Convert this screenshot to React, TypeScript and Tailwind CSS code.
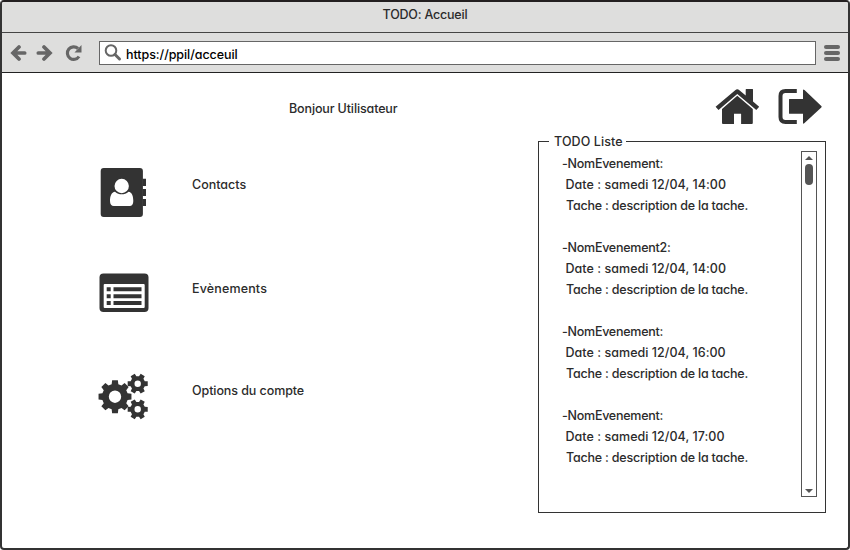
import React from "react";

const events = [
  { name: "-NomEvenement:", date: "Date : samedi 12/04, 14:00" },
  { name: "-NomEvenement2:", date: "Date : samedi 12/04, 14:00" },
  { name: "-NomEvenement:", date: "Date : samedi 12/04, 16:00" },
  { name: "-NomEvenement:", date: "Date : samedi 12/04, 17:00" },
];

function gearPath(cx: number, cy: number, r: number, root: number, hole: number, teeth: number) {
  const step = (Math.PI * 2) / teeth;
  const points: string[] = [];
  for (let i = 0; i < teeth; i++) {
    const a = i * step;
    const corners = [
      [root, -0.33],
      [r, -0.22],
      [r, 0.22],
      [root, 0.33],
    ];
    for (const [rad, k] of corners) {
      points.push(`${(cx + rad * Math.cos(a + k * step)).toFixed(2)} ${(cy + rad * Math.sin(a + k * step)).toFixed(2)}`);
    }
  }
  return `M${points.join("L")}ZM${cx - hole} ${cy}a${hole} ${hole} 0 1 0 ${hole * 2} 0a${hole} ${hole} 0 1 0 ${-hole * 2} 0Z`;
}

function ContactsIcon() {
  return (
    <svg width="50" height="52" viewBox="98 166 50 52" fill="#333">
      <rect x="100.7" y="168" width="42.2" height="49" rx="3" />
      <path d="M142.5 178.7h3.5v7.3h-3.5zM142.5 189h3.5v7h-3.5zM142.5 199h3.5v7h-3.5z" />
      <path fill="#fff" d="M115 191.7c4 3.5 9.5 3.5 13.5 0c3.5 0.3 4.8 4.5 4.8 9.3c0 3.5-1.5 5-3.5 5h-16c-2.3 0-3.8-1.5-3.8-5c0-5 1.5-9 5-9.3z" />
      <circle cx="121.7" cy="186" r="7.2" fill="#fff" />
    </svg>
  );
}

function EventsIcon() {
  return (
    <svg width="50" height="40" viewBox="99 273 50 40">
      <rect x="99.5" y="273.5" width="49" height="38.5" rx="4" fill="#333" />
      <rect x="103.7" y="284" width="41" height="24" rx="1" fill="#fff" />
      <path fill="#333" d="M106.7 287.3h4v4h-4zM113.5 287.3h28v4h-28zM106.7 294.2h4v4h-4zM113.5 294.2h28v4h-28zM106.7 301.1h4v4h-4zM113.5 301.1h28v4h-28z" />
    </svg>
  );
}

function GearsIcon() {
  return (
    <svg width="52" height="48" viewBox="98 373 52 48" fill="#333" fillRule="evenodd">
      <path d={gearPath(115, 396.7, 16.7, 13, 6.2, 8)} />
      <path d={gearPath(137.7, 383.7, 10.3, 7.5, 3.2, 6)} />
      <path d={gearPath(137.7, 409.3, 10.3, 7.5, 3.2, 6)} />
    </svg>
  );
}

function HomeIcon() {
  return (
    <svg width="46" height="36" viewBox="715 89 46 36" fill="#333">
      <path d="M715.6 106.8L735.2 90.2Q737.3 88.3 739.4 90.2L745.7 95.5V89.5Q745.7 89 746.2 89H752.5Q753 89 753 89.5V101.6L759.2 106.8L756.3 110L737.3 94L718.5 110Z" />
      <path d="M737.3 95.8L752.8 109V123Q752.8 124 751.8 124H741.1V113.7H734V124H723Q722 124 722 123V109Z" />
    </svg>
  );
}

function ExitIcon() {
  return (
    <svg width="46" height="36" viewBox="777 89 46 36">
      <path d="M796.8 91H785.5Q780.5 91 780.5 96V117Q780.5 122 785.5 122H796.8" fill="none" stroke="#333" strokeWidth="4" />
      <path d="M789 99.5Q789 99 789.5 99H803V90.2Q803 88.8 804.5 90L821.3 106Q822 106.7 821.3 107.4L804.5 123Q803 124.3 803 123V113.7H789.5Q789 113.7 789 113.2Z" fill="#333" />
    </svg>
  );
}

function Arrow({ flip }: { flip?: boolean }) {
  return (
    <svg width="17" height="16" viewBox="0 0 17 16" className={flip ? "-scale-x-100" : ""} fill="none" stroke="#666" strokeWidth="3.7">
      <path d="M9 2L3 8L9 14M3.5 8H14.7" strokeLinecap="round" />
    </svg>
  );
}

function MenuRow({ icon, label, className, labelClass }: { icon: React.ReactNode; label: string; className: string; labelClass: string }) {
  return (
    <div className={`flex h-[52px] items-start ${className}`}>
      <div className="w-[94px]">{icon}</div>
      <span className={labelClass}>{label}</span>
    </div>
  );
}

export default function App() {
  return (
    <div className="flex h-[550px] w-[850px] flex-col overflow-hidden rounded-[4px] border-2 border-[#333] border-t-[#231f20] bg-white font-['Inter','Liberation_Sans',sans-serif] text-[12.5px] leading-[21px] font-medium whitespace-pre text-[#2b2b2b] [font-feature-settings:'cv11']">
      <header className="h-[31px] shrink-0 border-b border-[#444] bg-[#dededd] pt-[2px] text-center">
        <span className="tracking-[-0.2px]">TODO: Accueil</span>
      </header>
      <nav className="flex h-10 shrink-0 items-center border-b border-[#222] bg-[#dededd] pl-2">
        <Arrow />
        <div className="w-[9px]" />
        <Arrow flip />
        <svg className="ml-[12px]" width="18" height="18" viewBox="0 0 18 18" fill="none" stroke="#666" strokeWidth="3.2">
          <path d="M13 4.5A6.3 6.3 0 1 0 14 12.500" />
          <path d="M16.500 1V8.500H9.500Z" fill="#666" stroke="none" />
        </svg>
        <div className="ml-[16px] flex h-6 w-[717px] items-center border border-[#666] bg-white pl-1 text-black">
          <svg width="18" height="18" viewBox="0 0 18 18" fill="none" stroke="#666">
            <circle cx="7" cy="6.5" r="5.3" strokeWidth="2" />
            <path d="M11 10.5L15.5 15" strokeWidth="3" strokeLinecap="round" />
          </svg>
          <span className="ml-[4px] pt-[3px] tracking-[-0.06px]">https://ppil/acceuil</span>
        </div>
        <div className="ml-[8px] flex flex-col gap-[2px]">
          <div className="h-1 w-4 rounded-full bg-[#666]" />
          <div className="h-1 w-4 rounded-full bg-[#666]" />
          <div className="h-1 w-4 rounded-full bg-[#666]" />
        </div>
      </nav>
      <main className="flex flex-1">
        <section className="w-[536px]">
          <p className="pt-[25px] pl-[287px] tracking-[-0.13px]">Bonjour Utilisateur</p>
          <div className="pt-[47px] pl-[96px]">
            <MenuRow icon={<ContactsIcon />} label="Contacts" className="" labelClass="pt-[8px]" />
            <MenuRow icon={<div className="pl-px"><EventsIcon /></div>} label="Evènements" className="mt-[52px] pt-[3px]" labelClass="pt-[5px] tracking-[0.15px]" />
            <MenuRow icon={<GearsIcon />} label="Options du compte" className="mt-[51px]" labelClass="pt-[7px] tracking-[-0.08px]" />
          </div>
        </section>
        <section className="w-[310px]">
          <div className="flex gap-4 pt-4 pl-[177px]">
            <HomeIcon />
            <ExitIcon />
          </div>
          <fieldset className="mt-[6px] h-[382px] w-[288px] border border-[#333] pl-[10px]">
            <legend className="pr-[3px] pl-[5px] tracking-[0.1px]">TODO Liste</legend>
            <div className="-mt-px flex">
              <div className="w-[252px] pt-[2px] pl-[13px]">
                {events.map((event, i) => (
                  <div key={i} className="mb-[21px]">
                    <p className="tracking-[-0.25px]">{event.name}</p>
                    <p className="pl-[3.5px] tracking-[0.04px]">{event.date}</p>
                    <p className="pl-[4px] tracking-[-0.2px]">Tache : description de la tache.</p>
                  </div>
                ))}
              </div>
              <div className="flex h-[346px] w-4 flex-col items-center border border-[#555] pt-[4px]">
                <div className="border-x-4 border-b-4 border-x-transparent border-b-[#555]" />
                <div className="mt-[4px] h-[21px] w-2 rounded-full bg-[#555]" />
                <div className="mt-auto mb-[3px] border-x-4 border-t-4 border-x-transparent border-t-[#555]" />
              </div>
            </div>
          </fieldset>
        </section>
      </main>
    </div>
  );
}
